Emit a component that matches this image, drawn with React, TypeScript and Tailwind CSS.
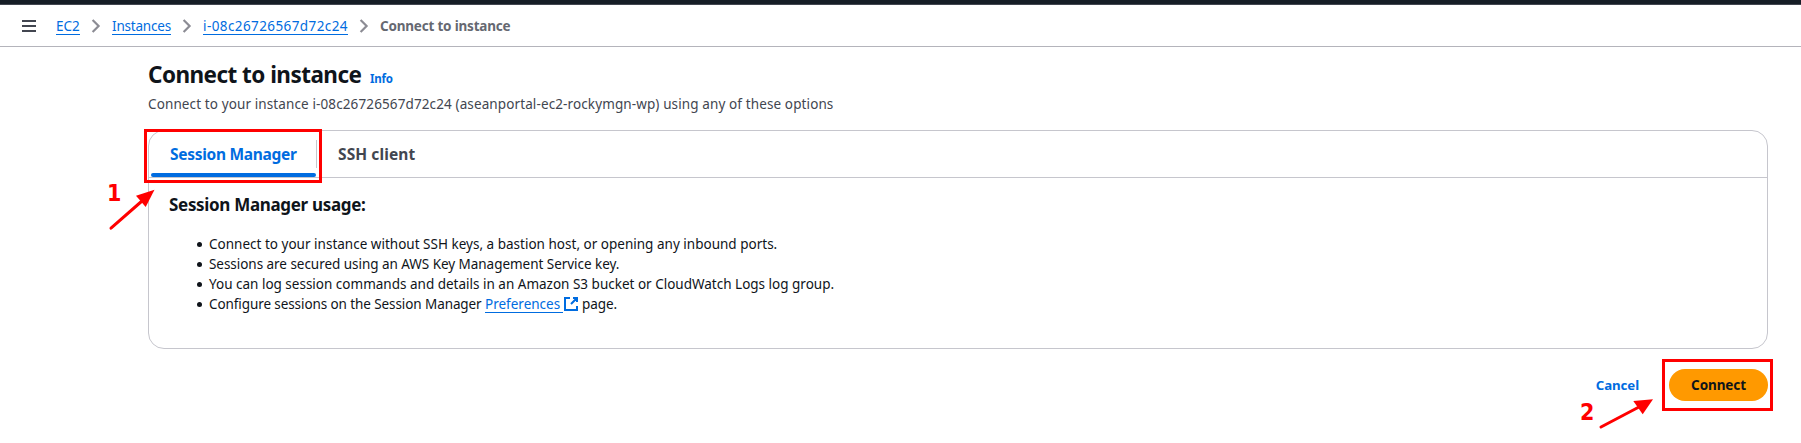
import type { ReactNode } from "react";

function Chevron() {
  return (
    <svg className="h-4 w-4 shrink-0" viewBox="0 0 16 16" fill="none" stroke="#8c8c94" strokeWidth="2.2">
      <path d="M4.6 2 10.6 8l-6 6" />
    </svg>
  );
}

function Crumb({ className, children }: { className: string; children: ReactNode }) {
  return (
    <a className={`flex h-[19px] shrink-0 items-start whitespace-nowrap border-b border-[#006ce0] leading-[20px] text-[#006ce0] ${className}`}>
      {children}
    </a>
  );
}

function ExternalIcon() {
  return (
    <svg className="h-4 w-4 shrink-0" viewBox="0 0 16 16" fill="none" stroke="#006ce0" strokeWidth="2">
      <path d="M10 2h4v4M8 8l6-6M14 10v4H2V2h5" />
    </svg>
  );
}

function Bullet({ className = "", children }: { className?: string; children: ReactNode }) {
  return (
    <li className={`flex h-5 items-start ${className}`}>
      <span className="mr-[7px] mt-2 h-[5px] w-[5px] shrink-0 rounded-full bg-[#0f141a]" />
      {children}
    </li>
  );
}

export default function App() {
  return (
    <div className="relative h-[443px] w-[1801px] overflow-hidden bg-white font-['Noto_Sans',sans-serif] text-[13.5px] leading-5 text-[#0f141a]">
      <div className="h-[5px] border-b border-[#424650] bg-[#161d26]" />

      <nav className="flex h-[42px] items-start border-b border-[#b4b4bb] pt-[11px]">
        <svg className="ml-[21px] mt-0.5 h-4 w-4 shrink-0" viewBox="0 0 16 16" stroke="#424650" strokeWidth="2">
          <path d="M1 3h14M1 8h14M1 13h14" />
        </svg>
        <Crumb className="ml-[19px] w-6">EC2</Crumb>
        <div className="flex w-8 justify-center pt-0.5"><Chevron /></div>
        <Crumb className="w-[59px] tracking-[-0.2px]">Instances</Crumb>
        <div className="flex w-8 justify-center pt-0.5"><Chevron /></div>
        <Crumb className="w-[145px] tracking-[0.41px]">i-08c26726567d72c24</Crumb>
        <div className="flex w-8 justify-center pt-0.5"><Chevron /></div>
        <span className="whitespace-nowrap font-bold tracking-[-0.2px] text-[#656871]">Connect to instance</span>
      </nav>

      <main className="ml-[148px] w-[1620px] pt-[13px]">
        <div className="flex h-[30px] items-baseline whitespace-nowrap">
          <h1 className="w-[222px] text-[22.5px] font-bold leading-[30px] tracking-[-0.54px]">Connect to instance</h1>
          <a className="text-[11.5px] font-bold tracking-[-0.2px] text-[#006ce0]">Info</a>
        </div>
        <p className="mt-1 whitespace-nowrap tracking-[0.115px] text-[#424650]">
          Connect to your instance i-08c26726567d72c24 (aseanportal-ec2-rockymgn-wp) using any of these options
        </p>

        <section className="mt-4 h-[219px] rounded-2xl border border-[#c6c6cd]">
          <div className="flex h-[47px] items-stretch border-b border-[#c6c6cd] text-[15.5px] font-bold">
            <div className="ml-0.5 flex w-[165px] flex-col">
              <span className="h-[42px] whitespace-nowrap pl-[19px] pt-[13px] tracking-[-0.3px] text-[#006ce0]">Session Manager</span>
              <div className="h-1 shrink-0 rounded-full bg-[#006ce0]" />
            </div>
            <div className="mt-[9px] h-7 w-px bg-[#c6c6cd]" />
            <span className="whitespace-nowrap pl-[21px] pt-[13px] tracking-[0.1px] text-[#424650]">SSH client</span>
          </div>
          <div className="pl-5 pt-4">
            <h2 className="whitespace-nowrap text-[17px] font-bold leading-[22px] tracking-[-0.32px]">Session Manager usage:</h2>
            <ul className="mt-[18px] whitespace-nowrap pl-7">
              <Bullet className="tracking-[0.01px]">Connect to your instance without SSH keys, a bastion host, or opening any inbound ports.</Bullet>
              <Bullet className="tracking-[-0.04px]">Sessions are secured using an AWS Key Management Service key.</Bullet>
              <Bullet>You can log session commands and details in an Amazon S3 bucket or CloudWatch Logs log group.</Bullet>
              <Bullet>
                <span className="w-[276px] tracking-[-0.09px]">Configure sessions on the Session Manager</span>
                <a className="h-[19px] w-[78px] border-b border-[#006ce0] text-[#006ce0]">Preferences</a>
                <span className="pt-0.5"><ExternalIcon /></span>
                <span className="ml-[3px] tracking-[-0.1px]">page.</span>
              </Bullet>
            </ul>
          </div>
        </section>

        <div className="mt-5 flex h-8 items-center justify-end font-bold">
          <button className="mr-[30px] h-8 text-[13.25px] tracking-[-0.1px] text-[#006ce0]">Cancel</button>
          <button className="h-8 w-[99px] rounded-full bg-[#ff9900] tracking-[-0.1px]">Connect</button>
        </div>
      </main>

      <div className="absolute left-[144px] top-[129px] h-[54px] w-[177.5px] border-[3px] border-[#ff0000]" />
      <div className="absolute left-[1662px] top-[359px] h-[52px] w-[111px] border-[3px] border-[#ff0000]" />
      <span className="absolute left-[107px] top-[181px] font-['DejaVu_Sans_Condensed','DejaVu_Sans',sans-serif] text-[23px] font-bold leading-6 text-[#ff0000] [font-stretch:condensed]">1</span>
      <span className="absolute left-[1580px] top-[400px] font-['DejaVu_Sans_Condensed','DejaVu_Sans',sans-serif] text-[23px] font-bold leading-6 text-[#ff0000] [font-stretch:condensed]">2</span>
      <svg className="absolute left-[106px] top-[186px] h-[48px] w-[52px]" viewBox="106 186 52 48">
        <path d="M111 228.2 142 201" stroke="#ff0000" strokeWidth="3" strokeLinecap="round" />
        <path d="M154.5 189.8 136 195.7 145.7 207Z" fill="#ff0000" />
      </svg>
      <svg className="absolute left-[1596px] top-[395px] h-[38px] w-[62px]" viewBox="1596 395 62 38">
        <path d="M1601 427 1639 407" stroke="#ff0000" strokeWidth="3" strokeLinecap="round" />
        <path d="M1653 399.2 1633.3 401 1642.7 414.3Z" fill="#ff0000" />
      </svg>
    </div>
  );
}
